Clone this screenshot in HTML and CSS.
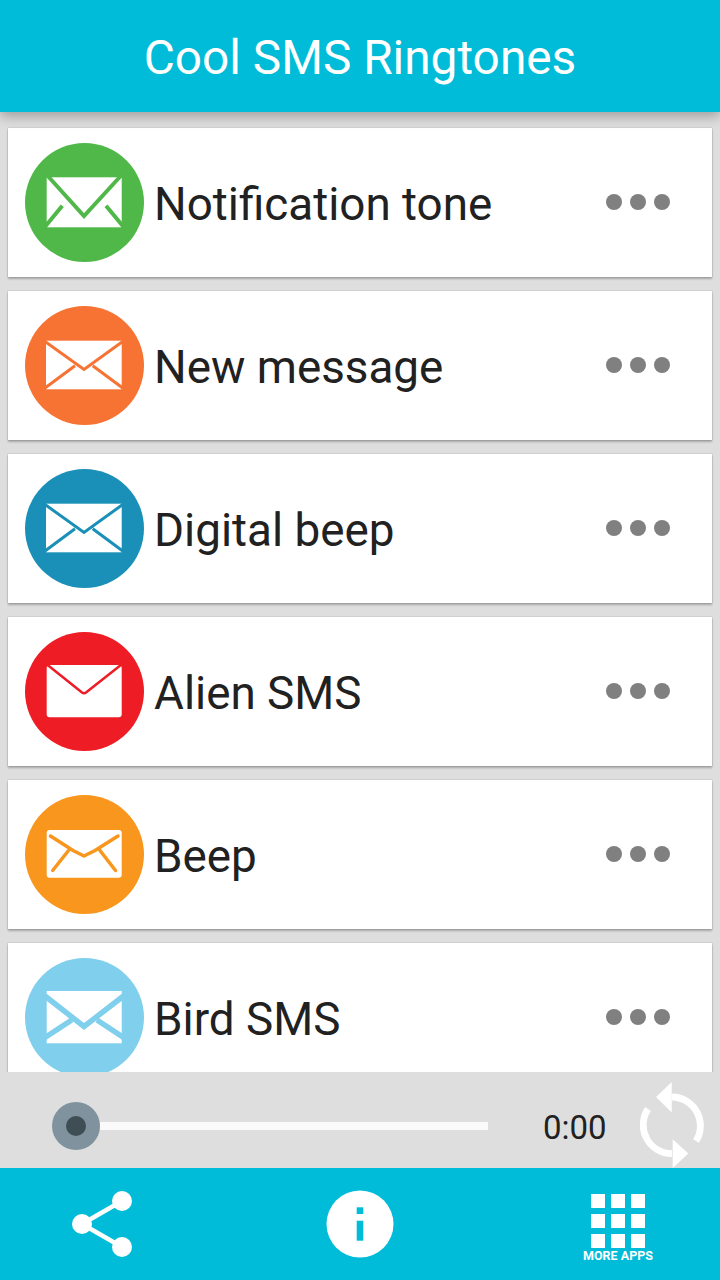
FILE: index.html
```html
<!DOCTYPE html>
<html lang="en">
<head>
<meta charset="utf-8">
<title>Cool SMS Ringtones</title>
<link rel="stylesheet" href="styles.css">
</head>
<body>
<div class="app">
  <header class="header">Cool SMS Ringtones</header>
  <main class="list">
    <div class="card">
      <svg class="avatar green" viewBox="0 0 119 119"><circle class="disc" cx="59.5" cy="59.5" r="59.5"/><rect class="paper" x="21.7" y="34.3" width="75" height="50"/><path class="cut w4" d="M21 31 59 73 97.5 31M19 85 37.3 62.7M81 62.7 99.5 85"/></svg>
      <span class="name">Notification tone</span>
      <div class="dots"><i></i><i></i><i></i></div>
    </div>
    <div class="card">
      <svg class="avatar orange" viewBox="0 0 119 119"><circle class="disc" cx="59.5" cy="59.5" r="59.5"/><rect class="paper" x="21" y="34.7" width="75.7" height="48.6"/><path class="cut w3" d="M20 35.5 59 63.5 97.7 35.5M20 82 50 59.7M67.7 59.7 97.7 82"/></svg>
      <span class="name">New message</span>
      <div class="dots"><i></i><i></i><i></i></div>
    </div>
    <div class="card">
      <svg class="avatar blue" viewBox="0 0 119 119"><circle class="disc" cx="59.5" cy="59.5" r="59.5"/><rect class="paper" x="21" y="34.7" width="75.7" height="48.6"/><path class="cut w3" d="M20 35.5 59 63.5 97.7 35.5M20 82 50 59.7M67.7 59.7 97.7 82"/></svg>
      <span class="name">Digital beep</span>
      <div class="dots"><i></i><i></i><i></i></div>
    </div>
    <div class="card">
      <svg class="avatar red" viewBox="0 0 119 119"><circle class="disc" cx="59.5" cy="59.5" r="59.5"/><rect class="paper" x="21.7" y="33" width="75" height="52.3" rx="3"/><path class="cut w25" d="M22 32.5 57 60.5Q59 62 61 60.5L96.5 32.5"/></svg>
      <span class="name">Alien SMS</span>
      <div class="dots"><i></i><i></i><i></i></div>
    </div>
    <div class="card">
      <svg class="avatar yellow" viewBox="0 0 119 119"><circle class="disc" cx="59.5" cy="59.5" r="59.5"/><rect class="paper" x="21.7" y="35" width="75" height="47.7" rx="3"/><path class="cut w35 round" d="M25.5 41 48 55.5Q51 57 54 58.5L59 61 64 58.5Q67 57 70 55.5L93 41M43.5 55.5 27.7 75.5M75 55.5 90.5 75.5"/></svg>
      <span class="name">Beep</span>
      <div class="dots"><i></i><i></i><i></i></div>
    </div>
    <div class="card">
      <svg class="avatar sky" viewBox="0 0 119 119"><circle class="disc" cx="59.5" cy="59.5" r="59.5"/><rect class="paper" x="21.7" y="33" width="75" height="52.3"/><path class="cut w5" d="M20 38 59 68.5 98.5 38M20 79.5 46.7 62M72 62 98.5 79.5"/></svg>
      <span class="name">Bird SMS</span>
      <div class="dots"><i></i><i></i><i></i></div>
    </div>
  </main>
  <section class="player">
    <div class="slider">
      <div class="thumb"></div>
      <div class="track"></div>
    </div>
    <span class="time">0:00</span>
    <svg class="repeat" viewBox="0 0 64 86">
      <path class="arc" d="M31.7 15A28.7 28.7 0 0 1 56 59"/>
      <path class="arrow" d="M16 15 31.7 0V30.6Z"/>
      <path class="arc" d="M32 71.6A28.7 28.7 0 0 1 8 27"/>
      <path class="arrow" d="M32.7 57.3 48.3 71.6 32.7 86Z"/>
    </svg>
  </section>
  <footer class="footer">
    <svg class="share" viewBox="0 0 62 68">
      <path class="share-line" d="M51 11 11 34 51 57"/>
      <circle class="share-node" cx="51" cy="11" r="10"/>
      <circle class="share-node" cx="11" cy="34" r="10"/>
      <circle class="share-node" cx="51" cy="57" r="10"/>
    </svg>
    <svg class="info" viewBox="0 0 68 68">
      <circle class="info-disc" cx="34" cy="34" r="33.5"/>
      <rect class="info-mark" x="30.7" y="17.3" width="6.6" height="6.7"/>
      <rect class="info-mark" x="30.7" y="30.7" width="6.6" height="20"/>
    </svg>
    <div class="apps">
      <div class="apps-grid"><i></i><i></i><i></i><i></i><i></i><i></i><i></i><i></i><i></i></div>
      <span class="apps-label">MORE APPS</span>
    </div>
  </footer>
</div>
</body>
</html>
```

FILE: styles.css
```css
* { box-sizing: border-box; }
html, body { margin: 0; padding: 0; }
body { width: 720px; height: 1280px; overflow: hidden; background: #dedede; font-family: Roboto, "Liberation Sans", sans-serif; }

.app { display: flex; flex-direction: column; height: 1280px; }

.header {
  flex: 0 0 112px;
  display: flex; align-items: center; justify-content: center;
  padding-top: 3px;
  background: #00bcd8; color: #fff;
  font-size: 47.8px; font-weight: 400;
  position: relative; z-index: 1;
  box-shadow: 0 4px 12px rgba(0,0,0,.3);
}

.list {
  flex: 1 1 0; min-height: 0; overflow: hidden;
  display: flex; flex-direction: column; gap: 14px;
  padding: 16px 8px 0;
}
.card {
  flex: 0 0 149px;
  display: flex; align-items: center;
  padding: 0 42px 0 17px;
  background: #fff;
  box-shadow: 0 2px 2px rgba(0,0,0,.25), 0 0 1px rgba(0,0,0,.35);
}
.avatar { flex: 0 0 119px; width: 119px; height: 119px; display: block; }
.disc { fill: currentColor; }
.paper { fill: #fff; }
.cut { fill: none; stroke: currentColor; }
.w25 { stroke-width: 2.5; }
.w3 { stroke-width: 3; }
.w35 { stroke-width: 3.5; }
.w4 { stroke-width: 4; }
.w5 { stroke-width: 5.5; }
.round { stroke-linecap: round; stroke-linejoin: round; }
.green { color: #4fb848; }
.orange { color: #f77333; }
.blue { color: #1a90b8; }
.red { color: #ee1c25; }
.yellow { color: #f9961e; }
.sky { color: #80cfec; }

.name { flex: 1 1 auto; margin-left: 10px; font-size: 45.8px; color: #212121; line-height: 1; padding-top: 4px; }
.dots { display: flex; gap: 8px; margin-top: -2px; }
.dots i { display: block; width: 16px; height: 16px; border-radius: 50%; background: #808080; }

.player {
  flex: 0 0 96px;
  display: flex; align-items: center;
  padding-top: 12px;
  background: #dedede;
  position: relative; z-index: 1;
}
.slider { display: flex; align-items: center; margin-left: 52px; width: 436px; }
.thumb {
  flex: 0 0 48px; width: 48px; height: 48px; border-radius: 50%;
  background: #7f929d; display: flex; align-items: center; justify-content: center;
}
.thumb::after { content: ""; width: 20px; height: 20px; border-radius: 50%; background: #3f4d55; }
.track { flex: 1 1 auto; height: 8px; background: #fafafa; }
.time { margin-left: 55px; font-size: 33px; color: #212121; line-height: 1; padding-top: 2px; }
.repeat { width: 64px; height: 86px; margin-left: 33px; margin-top: -2px; overflow: hidden; display: block; flex: none; }
.arc { fill: none; stroke: #fff; stroke-width: 6.8; }
.arrow { fill: #fff; }

.footer {
  flex: 0 0 112px;
  display: flex; align-items: flex-start;
  background: #00bcd8; color: #fff;
  position: relative; z-index: 1;
}
.share { width: 62px; height: 68px; margin: 22px 0 0 71px; display: block; flex: none; }
.share-line { fill: none; stroke: #fff; stroke-width: 4.5; }
.share-node { fill: #fff; }
.info { width: 68px; height: 68px; margin: 22px 0 0 193px; display: block; flex: none; }
.info-disc { fill: #fff; }
.info-mark { fill: #00bcd8; }
.apps { display: flex; flex-direction: column; align-items: center; margin: 26px 0 0 190px; width: 68px; }
.apps-grid { display: grid; grid-template-columns: repeat(3, 14px); grid-auto-rows: 14px; gap: 6px; }
.apps-grid i { display: block; background: #fff; }
.apps-label { font-size: 12.5px; font-weight: 700; line-height: 14px; margin-top: 1px; white-space: nowrap; }
```
